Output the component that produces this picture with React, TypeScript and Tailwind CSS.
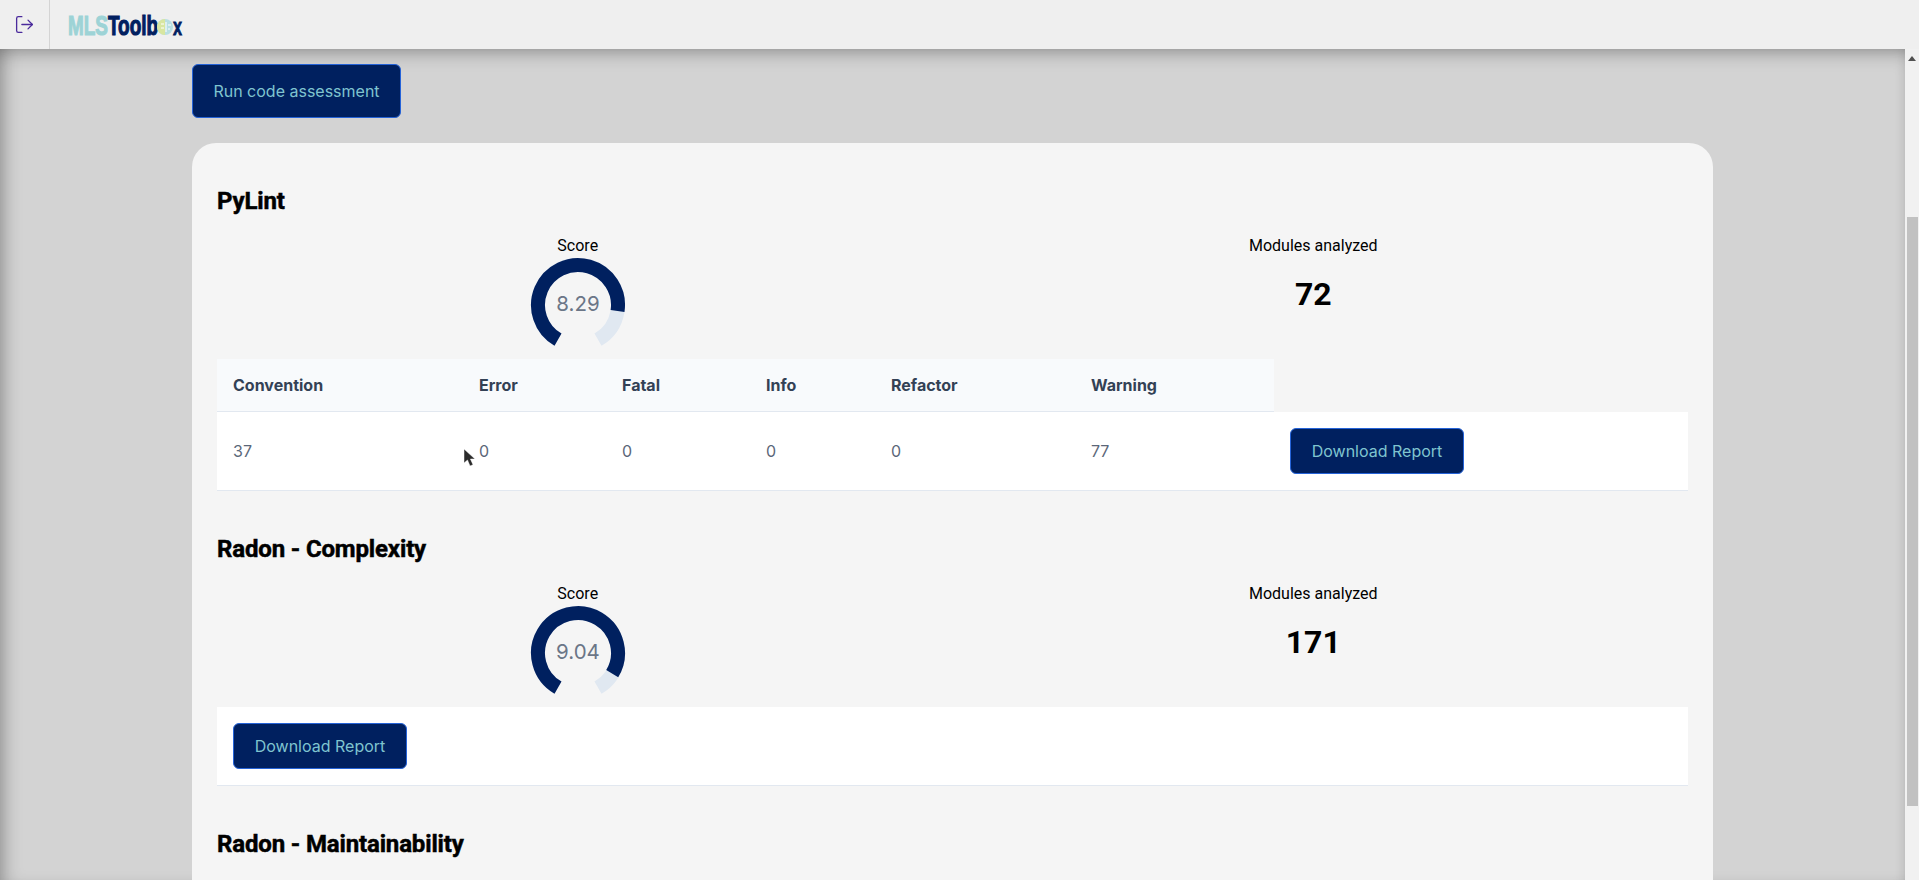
import { LogOut } from 'lucide-react'

const headers = ['Convention', 'Error', 'Fatal', 'Info', 'Refactor', 'Warning']
const counts = ['37', '0', '0', '0', '0', '77']

// from/to are fractions of the 300 degree dial, clockwise from the lower left
function arc(from: number, to: number) {
  const a = 30 + from * 300
  const b = 30 + to * 300
  const p = (deg: number) => {
    const rad = (deg * Math.PI) / 180
    return `${50 - 40 * Math.sin(rad)} ${50 + 40 * Math.cos(rad)}`
  }
  return `M ${p(a)} A 40 40 0 ${b - a > 180 ? 1 : 0} 1 ${p(b)}`
}

function Knob({ value }: { value: number }) {
  return (
    <svg width="100" height="100" viewBox="0 0 100 100" className="block">
      <path d={arc(0, 1)} fill="none" stroke="#e0e8f1" strokeWidth="14" />
      <path d={arc(0, value / 10)} fill="none" stroke="#00205f" strokeWidth="14" />
      <text
        x="50"
        y="56"
        textAnchor="middle"
        fontSize="20.5"
        fill="#6b7687"
        fontFamily="Inter, sans-serif"
      >
        {value.toFixed(2)}
      </text>
    </svg>
  )
}

function Stats({ score, modules }: { score: number; modules: string }) {
  return (
    <div className="-ml-[7px] grid h-[123px] w-[1471px] grid-cols-2 font-['Roboto',sans-serif] text-black">
      <div className="flex flex-col items-center">
        <span className="text-base leading-[19px]">Score</span>
        <Knob value={score} />
      </div>
      <div className="flex flex-col items-center">
        <span className="text-base leading-[19px]">Modules analyzed</span>
        <span className="mt-[19px] text-[32px] font-bold leading-[40px]">{modules}</span>
      </div>
    </div>
  )
}

function ReportButton() {
  return (
    <button className="h-[46px] w-[174px] rounded-md border border-[#2563d8] bg-[#00205f] text-base text-[#7fc4cf]">
      Download Report
    </button>
  )
}

function SectionTitle({ children }: { children: string }) {
  return (
    <h2 className="h-[29px] font-['Roboto',sans-serif] text-2xl font-bold leading-[29px] tracking-[-0.15px] text-black [-webkit-text-stroke:0.5px_black]">
      {children}
    </h2>
  )
}

function Logo() {
  return (
    <svg width="116" height="24" viewBox="0 0 116 24" className="block overflow-visible">
      <text
        x="0"
        y="22"
        fontFamily="'Liberation Sans', sans-serif"
        fontWeight="700"
        fontSize="28"
        strokeWidth="1.2"
        textLength="90"
        lengthAdjust="spacingAndGlyphs"
      >
        <tspan fill="#9dd3d6" stroke="#9dd3d6">MLS</tspan>
        <tspan fill="#012060" stroke="#012060">Toolb</tspan>
      </text>
      <circle cx="97" cy="14" r="8" fill="#b9dfe2" />
      <path d="M97 6a8 8 0 0 0 0 16z" fill="#d8e6a0" />
      <path d="M93 11h3M93 15h3M98 9v10M100 12h3M100 16h2" stroke="#ffffff" strokeWidth="1" fill="none" />
      <text
        x="105"
        y="22"
        fontFamily="'Liberation Sans', sans-serif"
        fontWeight="700"
        fontSize="24"
        fill="#012060"
        stroke="#012060"
        strokeWidth="0.8"
        textLength="9"
        lengthAdjust="spacingAndGlyphs"
      >
        x
      </text>
    </svg>
  )
}

function Cursor() {
  return (
    <svg width="14" height="20" viewBox="0 0 14 20" className="absolute left-0 top-[36px]">
      <path d="M1 1v14l3.5-3 2.5 6 3-1.3-2.6-5.7H12z" fill="#2b2b2b" stroke="#ffffff" strokeOpacity="0.6" strokeWidth="0.8" />
    </svg>
  )
}

export default function App() {
  return (
    <div className="flex h-[880px] w-full flex-col overflow-hidden bg-[#d3d3d3] font-['Inter',sans-serif]">
      <header className="z-10 flex h-[49px] shrink-0 items-center bg-[#efefef]">
        <div className="flex h-full w-[50px] items-center justify-center border-r border-[#d4d4d4]">
          <LogOut size={21} strokeWidth={1.5} className="text-[#4a2a9c]" />
        </div>
        <div className="ml-[18px]">
          <Logo />
        </div>
      </header>

      <div className="flex min-h-0 flex-1">
        <main className="min-w-0 flex-1 overflow-hidden pl-[192px] pt-[15px] shadow-[inset_14px_0_18px_-10px_rgba(0,0,0,0.28),inset_0_14px_18px_-10px_rgba(0,0,0,0.28),inset_-8px_0_12px_-8px_rgba(0,0,0,0.1)]">
          <button className="h-[54px] w-[209px] rounded-md border border-[#2563d8] bg-[#00205f] text-base text-[#7fc4cf]">
            Run code assessment
          </button>

          <div className="mt-[25px] w-[1521px] rounded-t-[24px] bg-[#f5f5f5] px-[25px] pt-[44px]">
            <SectionTitle>PyLint</SectionTitle>
            <div className="mt-[20px]">
              <Stats score={8.29} modules="72" />
            </div>
            <div className="grid grid-cols-[246px_143px_144px_125px_200px_199px_1fr]">
              {headers.map((h) => (
                <div
                  key={h}
                  className="flex h-[53px] items-center border-b border-[#e2e8f0] bg-[#f8fafc] pl-4 text-base font-bold text-[#334155]"
                >
                  {h}
                </div>
              ))}
              <div />
              {counts.map((c, i) => (
                <div
                  key={i}
                  className="relative flex h-[79px] items-center border-b border-[#e2e8f0] bg-white pl-4 text-base text-[#5b6779]"
                >
                  {i === 1 && <Cursor />}
                  {c}
                </div>
              ))}
              <div className="flex h-[79px] items-center border-b border-[#e2e8f0] bg-white pl-4">
                <ReportButton />
              </div>
            </div>

            <div className="mt-[44px]">
              <SectionTitle>Radon - Complexity</SectionTitle>
            </div>
            <div className="mt-[20px]">
              <Stats score={9.04} modules="171" />
            </div>
            <div className="flex h-[79px] items-center border-b border-[#e2e8f0] bg-white pl-4">
              <ReportButton />
            </div>

            <div className="mt-[44px]">
              <SectionTitle>Radon - Maintainability</SectionTitle>
            </div>
            <div className="h-[40px]" />
          </div>
        </main>

        <div className="relative w-[14px] shrink-0 bg-[#f1f1f1]">
          <div className="mx-auto mt-[7px] h-0 w-0 border-x-[4px] border-b-[5px] border-x-transparent border-b-[#505050]" />
          <div className="ml-[2px] mt-[156px] h-[589px] w-[11px] bg-[#c1c1c1]" />
        </div>
      </div>
    </div>
  )
}
